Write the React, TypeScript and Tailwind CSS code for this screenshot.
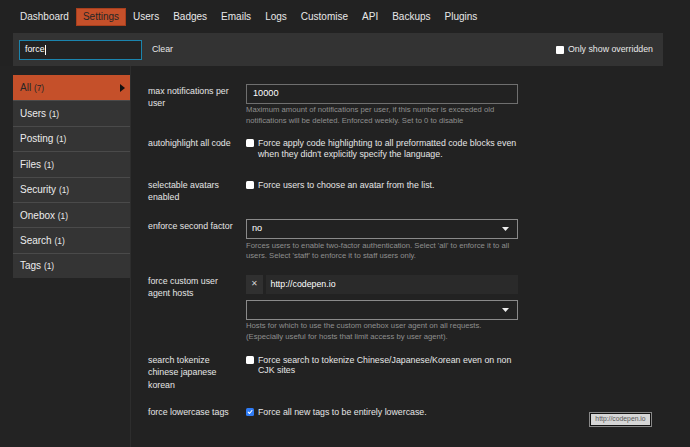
import React from "react";

const navItems = ["Dashboard", "Settings", "Users", "Badges", "Emails", "Logs", "Customise", "API", "Backups", "Plugins"];
const cats: [string, string][] = [
  ["All", "(7)"],
  ["Users", "(1)"],
  ["Posting", "(1)"],
  ["Files", "(1)"],
  ["Security", "(1)"],
  ["Onebox", "(1)"],
  ["Search", "(1)"],
  ["Tags", "(1)"],
];

function Box({ checked }: { checked?: boolean }) {
  if (checked) {
    return (
      <span className="mt-[1px] flex h-[8px] w-[8px] shrink-0 items-center justify-center rounded-[1.5px] bg-[#2f7cf6]">
        <svg width="6" height="6" viewBox="0 0 10 10">
          <path d="M2 5.3 L4.2 7.5 L8.2 2.5" fill="none" stroke="#fff" strokeWidth="1.8" strokeLinecap="round" strokeLinejoin="round" />
        </svg>
      </span>
    );
  }
  return <span className="mt-[1px] block h-[8px] w-[8px] shrink-0 rounded-[1.5px] bg-white" />;
}

function Caret() {
  return (
    <svg width="7" height="4" viewBox="0 0 7 4" className="shrink-0">
      <path d="M0 0 L7 0 L3.5 4 Z" fill="#eee" />
    </svg>
  );
}

function Label({ children }: { children: React.ReactNode }) {
  return <div className="w-[90px] shrink-0 text-[8.8px] leading-[12.4px] text-[#e6e6e6]">{children}</div>;
}

function Desc({ children }: { children: React.ReactNode }) {
  return <div className="mt-[1.5px] text-[7.7px] leading-[10.6px] text-[#8f8f8f]">{children}</div>;
}

function CheckText({ checked, children }: { checked?: boolean; children: React.ReactNode }) {
  return (
    <div className="flex items-start gap-[4px] pt-[1px]">
      <Box checked={checked} />
      <div className="text-[8.8px] leading-[10.4px] text-[#e6e6e6]">{children}</div>
    </div>
  );
}

export default function App() {
  return (
    <div className="relative h-[447px] w-[690px] overflow-hidden bg-[#222222] font-['Liberation_Sans',Arial,sans-serif] text-[#dddddd]">
      {/* nav */}
      <div className="flex h-[33px] items-start pl-[13px] pt-[8px]">
        {navItems.map((n) =>
          n === "Settings" ? (
            <div key={n} className="h-[18px] border border-[#a83f1d] bg-[#c5502a] px-[6px] text-[10px] leading-[16px] text-[#262626]">
              {n}
            </div>
          ) : (
            <div key={n} className="h-[18px] px-[7px] text-[10px] leading-[18px] text-[#e8e8e8]">
              {n}
            </div>
          )
        )}
      </div>

      {/* filter bar */}
      <div className="ml-[13px] flex h-[33px] w-[650px] items-center bg-[#333333] pl-[6px] pr-[10px]">
        <div className="flex h-[20px] w-[123px] items-center border border-[#1b84ad] bg-[#222222] pl-[5px] text-[8.8px] text-white">
          force<span className="ml-[0.5px] inline-block h-[10px] w-[1px] bg-white" />
        </div>
        <div className="ml-[10px] text-[8.8px] text-[#e8e8e8]">Clear</div>
        <div className="ml-auto flex items-center gap-[4px] text-[8.8px] text-[#e8e8e8]">
          <span className="block h-[8px] w-[8px] rounded-[1px] bg-white" />
          Only show overridden
        </div>
      </div>

      {/* main */}
      <div className="flex h-[381px]">
        <div className="w-[131px] shrink-0 border-r border-[#2d2d2d] bg-[#232323] pl-[13px]">
          <div className="w-[117px] pt-[9px]">
            {cats.map(([n, c], i) =>
              i === 0 ? (
                <div key={n} className="flex h-[25.4px] items-center justify-between bg-[#c5502a] pl-[7px] pr-[5px] text-[#262626]">
                  <span className="text-[10px]">
                    {n} <span className="text-[8.4px]">{c}</span>
                  </span>
                  <svg width="5" height="8" viewBox="0 0 5 8">
                    <path d="M0 0 L5 4 L0 8 Z" fill="#111" />
                  </svg>
                </div>
              ) : (
                <div key={n} className="flex h-[25.4px] items-center border-t border-[#4a4a4a] bg-[#343434] pl-[7px] text-[#ececec]">
                  <span className="text-[10px]">
                    {n} <span className="text-[8.4px]">{c}</span>
                  </span>
                </div>
              )
            )}
          </div>
        </div>

        <div className="flex-1 pl-[17px]">
          {/* row 1 */}
          <div className="mt-[17.5px] flex gap-[8px]">
            <div className="pt-[1px]">
              <Label>max notifications per user</Label>
            </div>
            <div className="w-[272px]">
              <div className="flex h-[20px] items-center border border-[#6f6f6f] bg-[#222222] pl-[6px] text-[9.2px] text-white">10000</div>
              <Desc>Maximum amount of notifications per user, if this number is exceeded old notifications will be deleted. Enforced weekly. Set to 0 to disable</Desc>
            </div>
          </div>

          {/* row 2 */}
          <div className="mt-[11px] flex gap-[8px]">
            <Label>autohighlight all code</Label>
            <div className="w-[272px]">
              <CheckText>Force apply code highlighting to all preformatted code blocks even when they didn't explicitly specify the language.</CheckText>
            </div>
          </div>

          {/* row 3 */}
          <div className="mt-[19.5px] flex gap-[8px]">
            <Label>selectable avatars enabled</Label>
            <div className="w-[272px]">
              <CheckText>Force users to choose an avatar from the list.</CheckText>
            </div>
          </div>

          {/* row 4 */}
          <div className="mt-[16px] flex gap-[8px]">
            <div className="pt-[0.5px]">
              <Label>enforce second factor</Label>
            </div>
            <div className="w-[272px]">
              <div className="flex h-[20px] items-center justify-between border border-[#8a8a8a] bg-[#222222] pl-[5px] pr-[8px] text-[9.2px] text-white">
                <span>no</span>
                <Caret />
              </div>
              <Desc>Forces users to enable two-factor authentication. Select 'all' to enforce it to all users. Select 'staff' to enforce it to staff users only.</Desc>
            </div>
          </div>

          {/* row 5 */}
          <div className="mt-[12.5px] flex gap-[8px]">
            <Label>force custom user agent hosts</Label>
            <div className="w-[272px]">
              <div className="flex h-[19.5px] gap-[2.5px]">
                <div className="flex w-[17px] items-center justify-center bg-[#303030] text-[8px] text-[#cfcfcf]">✕</div>
                <div className="flex flex-1 items-center bg-[#2a2a2a] pl-[5px] text-[8.8px] text-white">http://codepen.io</div>
              </div>
              <div className="mt-[5.5px] flex h-[20px] items-center justify-end border border-[#8a8a8a] bg-[#222222] pr-[8px]">
                <Caret />
              </div>
              <Desc>Hosts for which to use the custom onebox user agent on all requests. (Especially useful for hosts that limit access by user agent).</Desc>
            </div>
          </div>

          {/* row 6 */}
          <div className="mt-[11.5px] flex gap-[8px]">
            <Label>search tokenize chinese japanese korean</Label>
            <div className="w-[272px]">
              <CheckText>Force search to tokenize Chinese/Japanese/Korean even on non CJK sites</CheckText>
            </div>
          </div>

          {/* row 7 */}
          <div className="mt-[15.5px] flex gap-[8px]">
            <Label>force lowercase tags</Label>
            <div className="w-[272px]">
              <CheckText checked>Force all new tags to be entirely lowercase.</CheckText>
            </div>
          </div>
        </div>
      </div>

      {/* tooltip */}
      <div className="absolute left-[590px] top-[412.5px] flex h-[13px] w-[61px] items-center justify-center border border-[#111] bg-[#d6d6d6] text-[6.8px] text-[#555] outline outline-1 outline-[#888]">
        http://codepen.io
      </div>
    </div>
  );
}
